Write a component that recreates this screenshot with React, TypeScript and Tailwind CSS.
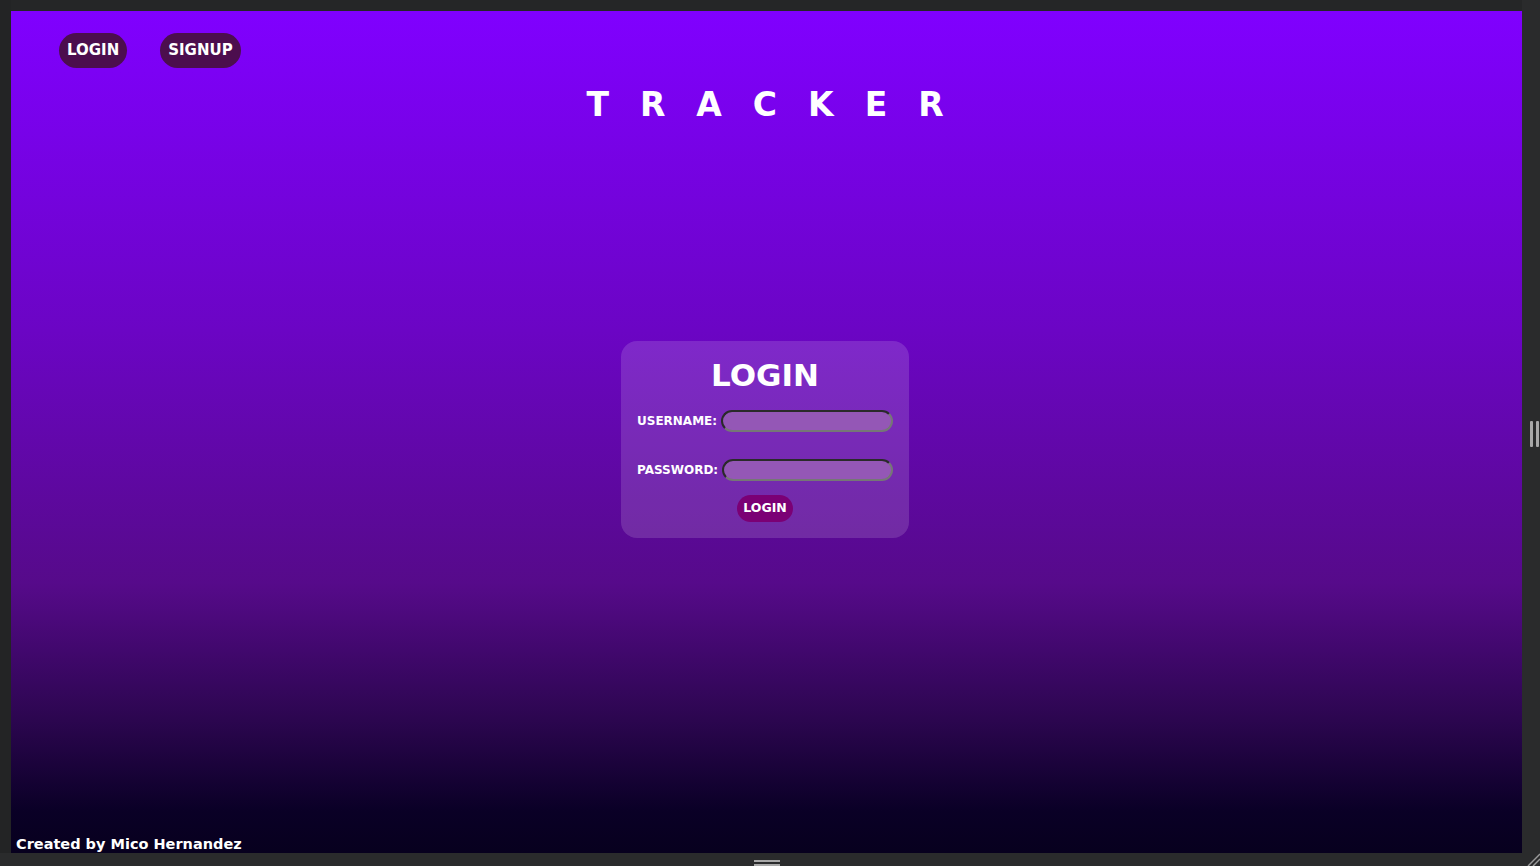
import React from "react";

const font = { fontFamily: '"DejaVu Sans", "Liberation Sans", sans-serif' };

export default function App() {
  return (
    <div className="w-[1540px] h-[866px] bg-[#252627] flex flex-col overflow-hidden" style={font}>
      <div className="flex flex-1 min-h-0">
        <div className="w-[11px] bg-[#232425]" />
        <div className="flex-1 flex flex-col mt-[11px] bg-[linear-gradient(to_bottom,#8000ff_0%,#6b05c4_38%,#560a8a_68%,#2c0650_84%,#0a0026_95%,#07001e_100%)] relative">
          <nav className="flex items-center gap-[33px] pl-[48px] pt-[22px]">
            <button className="h-[35px] px-[8px] rounded-full bg-[#4c0e4e] text-white font-bold text-[15px] leading-none">
              LOGIN
            </button>
            <button className="h-[35px] px-[8px] rounded-full bg-[#4c0e4e] text-white font-bold text-[15px] leading-none">
              SIGNUP
            </button>
          </nav>
          <h1 className="text-center text-white font-bold text-[33px] leading-none tracking-[31px] pl-[28px] mt-[20px]">
            TRACKER
          </h1>
          <div className="flex-1 flex items-center justify-center pb-[118px] pt-[40px] pr-[3px]">
            <div className="w-[288px] h-[197px] rounded-[16px] bg-[rgba(255,255,255,0.14)] flex flex-col items-center pt-[19px] px-[16px]">
              <h2 className="text-white font-bold text-[31px] leading-none mb-[19px]">LOGIN</h2>
              <div className="w-full flex items-center gap-[4px]">
                <label className="text-white font-bold text-[12px] whitespace-nowrap">USERNAME:</label>
                <input className="flex-1 min-w-0 h-[22px] rounded-full bg-[#9457b6] border-2 border-t-[#2a2a2a] border-l-[#2a2a2a] border-b-[#767676] border-r-[#767676] outline-none" />
              </div>
              <div className="w-full flex items-center gap-[4px] mt-[27px]">
                <label className="text-white font-bold text-[12px] whitespace-nowrap">PASSWORD:</label>
                <input type="password" className="flex-1 min-w-0 h-[22px] rounded-full bg-[#9457b6] border-2 border-t-[#2a2a2a] border-l-[#2a2a2a] border-b-[#767676] border-r-[#767676] outline-none" />
              </div>
              <button className="mt-[14px] h-[27px] px-[6px] rounded-full bg-[#7b0075] text-white font-bold text-[12.5px] leading-none">
                LOGIN
              </button>
            </div>
          </div>
          <div className="pl-[5px] pb-[0px] text-white font-bold text-[14.5px] leading-[18px]">
            Created by Mico Hernandez
          </div>
        </div>
        <div className="w-[18px] bg-[#2a2b2c] flex items-center justify-center relative">
          <div className="flex gap-[3px] ml-[6px] mt-[14px]">
            <div className="w-[3px] h-[26px] bg-[#a8a8a8] rounded-[1px]" />
            <div className="w-[3px] h-[26px] bg-[#a8a8a8] rounded-[1px]" />
          </div>
        </div>
      </div>
      <div className="h-[13px] bg-[#2a2b2c] flex justify-center relative">
        <div className="flex flex-col gap-[2px] mt-[7px] ml-[-6px]">
          <div className="w-[26px] h-[2px] bg-[#a8a8a8]" />
          <div className="w-[26px] h-[2px] bg-[#a8a8a8]" />
        </div>
        <svg className="absolute right-[0px] bottom-[0px]" width="14" height="14" viewBox="0 0 14 14">
          <line x1="2" y1="14" x2="14" y2="2" stroke="#9a9a9a" strokeWidth="1.5" />
          <line x1="7" y1="14" x2="14" y2="7" stroke="#9a9a9a" strokeWidth="1.5" />
        </svg>
      </div>
    </div>
  );
}
